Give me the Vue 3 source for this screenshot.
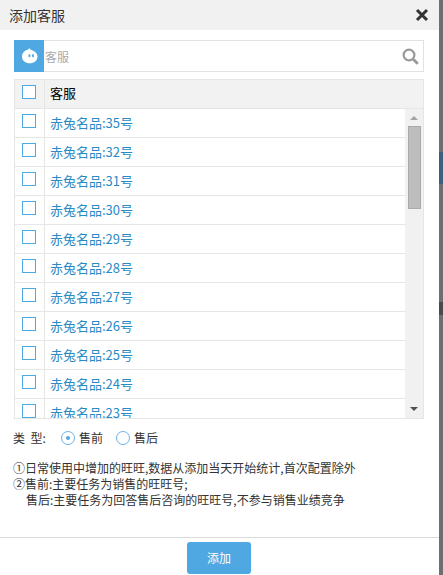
<script setup>
const rows = [35, 32, 31, 30, 29, 28, 27, 26, 25, 24, 23]
</script>

<template>
  <div class="page">
    <span class="peek peek-a"></span>
    <span class="peek peek-b"></span>
    <div class="dialog">
      <header class="head">
        <span class="title">添加客服</span>
        <svg class="close" width="14" height="14" viewBox="0 0 14 14"><path d="M2 2 12 12M12 2 2 12" stroke="#333" stroke-width="3" fill="none" /></svg>
      </header>
      <div class="search">
        <div class="logo">
          <svg width="18" height="18" viewBox="0 0 18 18">
            <path d="M9.500 .8C9.500 2 10.500 2.600 12 3.200 15 4.200 17.500 6.500 17.500 9.500 17.500 13.500 14 16.300 9.800 16.300S2 13.500 2 9.700C2 6.300 4.500 3.700 7 3 8.300 2.600 9.300 1.900 9.500 .8z" fill="#fff" />
            <ellipse cx="9.400" cy="8.700" rx="1" ry="1.600" fill="#4fa8e2" />
            <ellipse cx="13" cy="8.700" rx="1" ry="1.600" fill="#4fa8e2" />
          </svg>
        </div>
        <span class="placeholder">客服</span>
        <svg class="mag" width="17" height="17" viewBox="0 0 17 17"><circle cx="7" cy="7" r="5.400" fill="none" stroke="#999" stroke-width="2.200" /><path d="M11.200 11.200 15.800 15.800" stroke="#999" stroke-width="2.800" /></svg>
      </div>
      <div class="table">
        <div class="thead">
          <div class="cell-check"><span class="box"></span></div>
          <div class="cell-name">客服</div>
        </div>
        <div class="body">
          <div class="rows">
            <div v-for="n in rows" :key="n" class="row">
              <div class="cell-check"><span class="box"></span></div>
              <div class="cell-name link">赤兔名品:{{ n }}号</div>
            </div>
          </div>
          <div class="scrollbar">
            <span class="arrow up"></span>
            <span class="thumb"></span>
            <span class="arrow down"></span>
          </div>
        </div>
      </div>
      <div class="types">
        <span class="type-label">类&nbsp;&nbsp;型:</span>
        <span class="radio on"><i></i></span><span class="opt">售前</span>
        <span class="radio"></span><span class="opt">售后</span>
      </div>
      <div class="notes">
        <p>①日常使用中增加的旺旺,数据从添加当天开始统计,首次配置除外</p>
        <p>②售前:主要任务为销售的旺旺号;</p>
        <p class="indent">售后:主要任务为回答售后咨询的旺旺号,不参与销售业绩竞争</p>
      </div>
      <footer class="foot"><button class="add">添加</button></footer>
    </div>
  </div>
</template>

<style>
html, body { margin: 0; background: #6e6e6e; }
</style>

<style scoped>
.page {
  position: relative;
  width: 443px;
  height: 575px;
  overflow: hidden;
  background: #6e6e6e;
  font-family: "Noto Sans CJK SC", "Liberation Sans", sans-serif;
  font-size: 12px;
  color: #333;
}
.peek { position: absolute; left: 439px; width: 4px; }
.peek-a { top: 152px; height: 32px; background: #3d5f7d; }
.peek-b { top: 302px; height: 13px; background: #4a4a4a; }
.dialog {
  width: 439px;
  height: 575px;
  background: #fff;
}
.head {
  height: 30px;
  background: #f1f1f1;
  display: flex;
  align-items: center;
  justify-content: space-between;
  padding: 0 10px 0 9px;
}
.title { font-size: 14px; }
.close { display: block; margin-top: -1px; }
.search {
  margin: 10px 0 0 14px;
  width: 410px;
  height: 32px;
  box-sizing: border-box;
  border: 1px solid #e2e2e2;
  border-left: 0;
  display: flex;
  align-items: center;
}
.logo {
  width: 30px;
  height: 32px;
  margin: -1px 1px -1px 0;
  background: #4fa8e2;
  display: flex;
  align-items: center;
  justify-content: center;
}
.placeholder { color: #aaa; font-size: 12px; }
.mag { margin-left: auto; margin-right: 4px; }
.table {
  margin: 7px 0 0 14px;
  width: 410px;
  height: 340px;
  box-sizing: border-box;
  border: 1px solid #e6e6e6;
  overflow: hidden;
}
.thead {
  height: 29px;
  background: #f2f2f2;
  border-bottom: 1px solid #e6e6e6;
  display: flex;
  box-sizing: border-box;
  color: #000;
}
.cell-check {
  width: 30px;
  flex: none;
  border-right: 1px solid #e6e6e6;
  box-sizing: border-box;
  display: flex;
  padding: 5px 0 0 7px;
}
.cell-name {
  padding-left: 5px;
  line-height: 25px;
  font-size: 13px;
}
.box {
  width: 14px;
  height: 14px;
  border: 1px solid #4fa8e2;
  box-sizing: border-box;
  background: #fff;
  display: block;
}
.body { display: flex; height: 310px; }
.rows { flex: 1; overflow: hidden; }
.row {
  height: 29px;
  display: flex;
  box-sizing: border-box;
  border-bottom: 1px solid #e6e6e6;
}
.link { color: #2a8ac6; line-height: 27px; }
.scrollbar {
  width: 18px;
  flex: none;
  background: #f1f1f1;
  display: flex;
  flex-direction: column;
  align-items: center;
}
.thumb {
  width: 13px;
  height: 83px;
  margin-top: 6px;
  background: #bdbdbd;
  border: 1px solid #aaa;
  box-sizing: border-box;
}
.arrow { width: 0; height: 0; border: 4px solid transparent; }
.arrow.up { border-bottom: 4px solid #a3a3a3; border-top: 0; margin-top: 7px; }
.arrow.down { border-top: 4px solid #505050; border-bottom: 0; margin-top: auto; margin-bottom: 8px; }
.types {
  display: flex;
  align-items: center;
  margin: 9px 0 0 13px;
  height: 20px;
}
.type-label { width: 48px; margin-bottom: 2px; }
.radio {
  width: 14px;
  height: 14px;
  border: 1px solid #6bb3e6;
  border-radius: 50%;
  box-sizing: border-box;
  display: flex;
  align-items: center;
  justify-content: center;
  margin-right: 4px;
}
.radio i { width: 4px; height: 4px; border-radius: 50%; background: #4fa8e2; display: block; }
.opt { margin-right: 13px; margin-bottom: 2px; }
.notes { margin: 12px 0 0 13px; }
.notes p { margin: 0; line-height: 16px; white-space: nowrap; }
.notes .indent { padding-left: 13px; }
.foot {
  margin-top: 29px;
  border-top: 1px solid #d9d9d9;
  height: 37px;
  display: flex;
  justify-content: center;
  padding-top: 4px;
  padding-right: 1px;
}
.add {
  width: 64px;
  height: 32px;
  background: #4fa8e2;
  color: #fff;
  border: 0;
  border-radius: 3px;
  font: inherit;
  padding: 0 0 2px;
}
</style>
